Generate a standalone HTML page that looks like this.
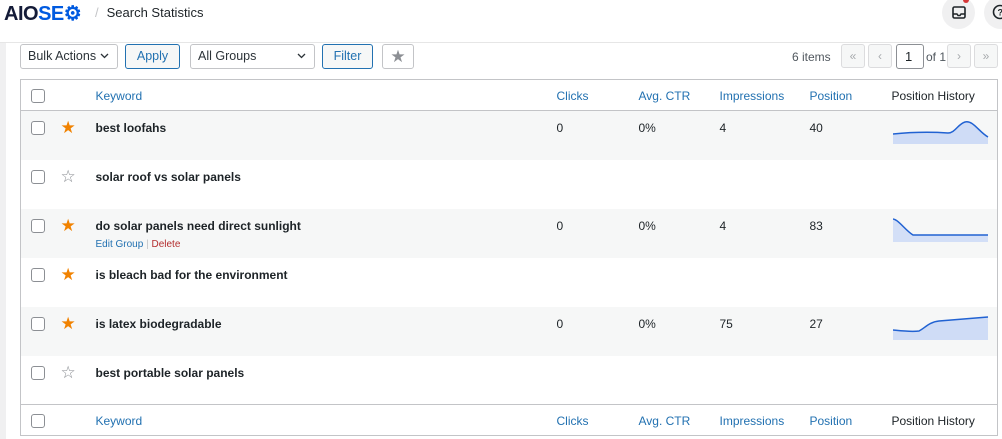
<!DOCTYPE html>
<html><head><style>
*{box-sizing:border-box;margin:0;padding:0}
body{width:1002px;height:439px;overflow:hidden;background:#f0f0f1;font-family:"Liberation Sans",sans-serif;font-size:12px;color:#1d2327;position:relative}
.top{position:absolute;left:0;top:0;width:1002px;height:43px;background:#fff;border-bottom:1px solid #e6e6e6}
.main{position:absolute;left:6px;top:43px;width:996px;height:396px;background:#fff}
.logo{position:absolute;left:4px;top:1px;font-weight:bold;font-size:20px;letter-spacing:-0.5px;color:#141b38}
.logo span{color:#005ae0}
.crumb{position:absolute;left:95px;top:5px;font-size:13px;color:#1d2327}
.crumb i{color:#c3c4c7;font-style:normal;margin-right:8px}
.circ{position:absolute;top:-4px;width:33px;height:33px;border-radius:50%;background:#f0f0f1}
.btn{position:absolute;top:44px;height:25px;border:1px solid #c3c4c7;border-radius:3px;background:#fff;font-size:12.5px;line-height:23px;padding-left:7px;color:#2c3338}
.btn.b{border-color:#2271b1;color:#2271b1;background:#f6f7f7;text-align:center;padding:0}
.pg{position:absolute;top:44px;width:24px;height:24px;border:1px solid #dcdcde;border-radius:3px;background:#f6f7f7;color:#a7aaad;text-align:center;line-height:22px;font-size:12px}
table{position:absolute;left:20px;top:79px;width:978px;border-collapse:collapse;border:1px solid #c3c4c7;background:#fff}
td{height:49px;vertical-align:top;padding-top:10px;font-size:12px}
tr.h td{height:31px;padding-top:9px;color:#2271b1}
tr.h td.ph{color:#1d2327}
tr.h{border-bottom:1px solid #c3c4c7}
tr.f{border-top:1px solid #c3c4c7}
tr.g td{background:#f6f7f7}
.cb{display:inline-block;width:14px;height:14px;border:1px solid #8c8f94;border-radius:3px;margin-left:10px;background:#fff}
.kw{font-weight:bold;font-size:12px;padding-left:1px}
.st{font-size:17px;line-height:14px;color:#f18200}
.so{font-size:17px;line-height:14px;color:#8c8f94}
.act{font-size:10px;margin-top:6px;color:#2271b1;font-weight:normal}
.act b{font-weight:normal;color:#b32d2e}
.chev{position:absolute;right:8px;top:8px}
</style></head><body>
<div class="top">
<div class="logo">AIO<span>SE&#x2699;</span></div>
<div class="crumb"><i>/</i>Search Statistics</div>
<div class="circ" style="left:942px"><svg width="33" height="33"><rect x="11" y="11" width="12" height="11" rx="1.5" fill="none" stroke="#1d2327" stroke-width="1.6"/><path d="M11 18h4l1 1.5h2l1-1.5h4" fill="none" stroke="#1d2327" stroke-width="1.4"/></svg></div>
<div style="position:absolute;left:963px;top:0;width:6px;height:3px;background:#d63638;border-radius:0 0 3px 3px"></div>
<div class="circ" style="left:984px"><svg width="33" height="33"><circle cx="16" cy="16" r="6.5" fill="none" stroke="#1d2327" stroke-width="1.6"/><text x="13.5" y="19.5" font-size="9" font-family="Liberation Sans" font-weight="bold" fill="#1d2327">?</text></svg></div>
</div>
<div class="main"></div>
<div class="btn" style="left:20px;width:98px">Bulk Actions <svg class="chev" width="9" height="6"><path d="M1 1l3.5 3.5L8 1" fill="none" stroke="#2c3338" stroke-width="1.3"/></svg></div>
<div class="btn b" style="left:125px;width:55px">Apply</div>
<div class="btn" style="left:190px;width:125px">All Groups <svg class="chev" width="9" height="6"><path d="M1 1l3.5 3.5L8 1" fill="none" stroke="#2c3338" stroke-width="1.3"/></svg></div>
<div class="btn b" style="left:322px;width:51px">Filter</div>
<div class="btn" style="left:382px;width:32px;padding:0;text-align:center;color:#8c8f94;font-size:17px">&#9733;</div>
<div style="position:absolute;left:792px;top:50px;font-size:12px;color:#50575e">6 items</div>
<div class="pg" style="left:841px">&laquo;</div>
<div class="pg" style="left:868px">&lsaquo;</div>
<div style="position:absolute;left:896px;top:44px;width:28px;height:25px;border:1px solid #8c8f94;border-radius:3px;background:#fff;font-size:13px;line-height:23px;padding-left:8px">1</div>
<div style="position:absolute;left:926px;top:50px;font-size:12px;color:#50575e">of 1</div>
<div class="pg" style="left:947px">&rsaquo;</div>
<div class="pg" style="left:974px">&raquo;</div>
<table>
<colgroup><col style="width:40px"><col style="width:34px"><col style="width:462px"><col style="width:82px"><col style="width:81px"><col style="width:90px"><col style="width:82px"><col></colgroup>
<tr class="h"><td><span class="cb"></span></td><td></td><td style="padding-left:1px">Keyword</td><td>Clicks</td><td>Avg. CTR</td><td>Impressions</td><td>Position</td><td class="ph">Position History</td></tr>
<tr class="g"><td><span class="cb"></span></td><td class="st">&#9733;</td><td class="kw">best loofahs</td><td>0</td><td>0%</td><td>4</td><td>40</td><td><svg width="97" height="24" style="margin-top:-1px;margin-left:1px"><path d="M0 14C20 12 40 12 55 13C62 13 65 4 72 2C80 0 86 12 95 17L95 24L0 24Z" fill="#cfdcf6"/><path d="M0 14C20 12 40 12 55 13C62 13 65 4 72 2C80 0 86 12 95 17" fill="none" stroke="#2162d2" stroke-width="1.5"/></svg></td></tr>
<tr><td><span class="cb"></span></td><td class="so">&#9734;</td><td class="kw">solar roof vs solar panels</td><td></td><td></td><td></td><td></td><td></td></tr>
<tr class="g"><td><span class="cb"></span></td><td class="st">&#9733;</td><td class="kw">do solar panels need direct sunlight<div class="act">Edit Group <span style="color:#c3c4c7">|</span> <b>Delete</b></div></td><td>0</td><td>0%</td><td>4</td><td>83</td><td><svg width="97" height="24" style="margin-top:-1px;margin-left:1px"><path d="M0 1C6 2 12 12 20 17L95 17L95 24L0 24Z" fill="#cfdcf6" opacity=".9"/><path d="M0 1C6 2 12 12 20 17L95 17" fill="none" stroke="#2162d2" stroke-width="1.5"/></svg></td></tr>
<tr><td><span class="cb"></span></td><td class="st">&#9733;</td><td class="kw">is bleach bad for the environment</td><td></td><td></td><td></td><td></td><td></td></tr>
<tr class="g"><td><span class="cb"></span></td><td class="st">&#9733;</td><td class="kw">is latex biodegradable</td><td>0</td><td>0%</td><td>75</td><td>27</td><td><svg width="97" height="24" style="margin-top:-1px;margin-left:1px"><path d="M0 14C10 15 18 16 26 15C32 12 36 6 46 5L95 1L95 24L0 24Z" fill="#cfdcf6"/><path d="M0 14C10 15 18 16 26 15C32 12 36 6 46 5L95 1" fill="none" stroke="#2162d2" stroke-width="1.5"/></svg></td></tr>
<tr><td><span class="cb"></span></td><td class="so">&#9734;</td><td class="kw">best portable solar panels</td><td></td><td></td><td></td><td></td><td></td></tr>
<tr class="h f"><td><span class="cb"></span></td><td></td><td style="padding-left:1px">Keyword</td><td>Clicks</td><td>Avg. CTR</td><td>Impressions</td><td>Position</td><td class="ph">Position History</td></tr>
</table>
</body></html>
